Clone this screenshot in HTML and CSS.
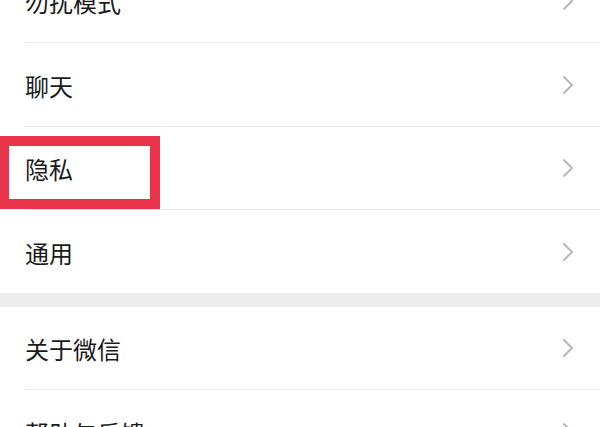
FILE: index.html
```html
<!DOCTYPE html>
<html lang="zh-CN">
<head>
<meta charset="utf-8">
<link rel="stylesheet" href="styles.css">
</head>
<body>
<div class="page">
  <div class="group first">
    <div class="row"><div class="inner"><span class="label">勿扰模式</span><svg class="chev" viewBox="0 0 12 20"><path d="M1.5 1.5 L10 10 L1.5 18.5"/></svg></div></div>
    <div class="row"><div class="inner"><span class="label">聊天</span><svg class="chev" viewBox="0 0 12 20"><path d="M1.5 1.5 L10 10 L1.5 18.5"/></svg></div></div>
    <div class="row"><div class="inner short"><span class="label">隐私</span><svg class="chev" viewBox="0 0 12 20"><path d="M1.5 1.5 L10 10 L1.5 18.5"/></svg></div></div>
    <div class="row last"><div class="inner"><span class="label">通用</span><svg class="chev" viewBox="0 0 12 20"><path d="M1.5 1.5 L10 10 L1.5 18.5"/></svg></div></div>
  </div>
  <div class="gap"></div>
  <div class="group">
    <div class="row"><div class="inner short"><span class="label">关于微信</span><svg class="chev" viewBox="0 0 12 20"><path d="M1.5 1.5 L10 10 L1.5 18.5"/></svg></div></div>
    <div class="row"><div class="inner"><span class="label">帮助与反馈</span><svg class="chev" viewBox="0 0 12 20"><path d="M1.5 1.5 L10 10 L1.5 18.5"/></svg></div></div>
  </div>
  <div class="highlight"></div>
</div>
</body>
</html>
```
FILE: styles.css
```css
html, body {
  margin: 0;
  padding: 0;
  background: #ffffff;
}
body {
  width: 600px;
  height: 427px;
  overflow: hidden;
  font-family: "Noto Sans CJK SC", "Noto Sans", sans-serif;
}
.page {
  position: relative;
  width: 600px;
}
.group {
  background: #ffffff;
}
.group.first {
  margin-top: -41px;
}
.row {
  padding-left: 25px;
}
.inner {
  height: 83px;
  display: flex;
  align-items: center;
  justify-content: space-between;
  padding-right: 26px;
  border-bottom: 1px solid #e9e9e9;
}
.inner.short {
  height: 82px;
}
.row.last .inner {
  height: 83px;
  border-bottom: none;
}
.label {
  font-size: 24px;
  color: #1b1b1b;
  line-height: 1;
  padding-top: 2px;
}
.chev {
  width: 12px;
  height: 20px;
  fill: none;
  stroke: #b3b3b3;
  stroke-width: 1.8;
}
.gap {
  height: 14px;
  background: #ededed;
}
.highlight {
  position: absolute;
  left: -1px;
  top: 177px;
  width: 141px;
  height: 53px;
  border: 10px solid #e8334a;
}
```
